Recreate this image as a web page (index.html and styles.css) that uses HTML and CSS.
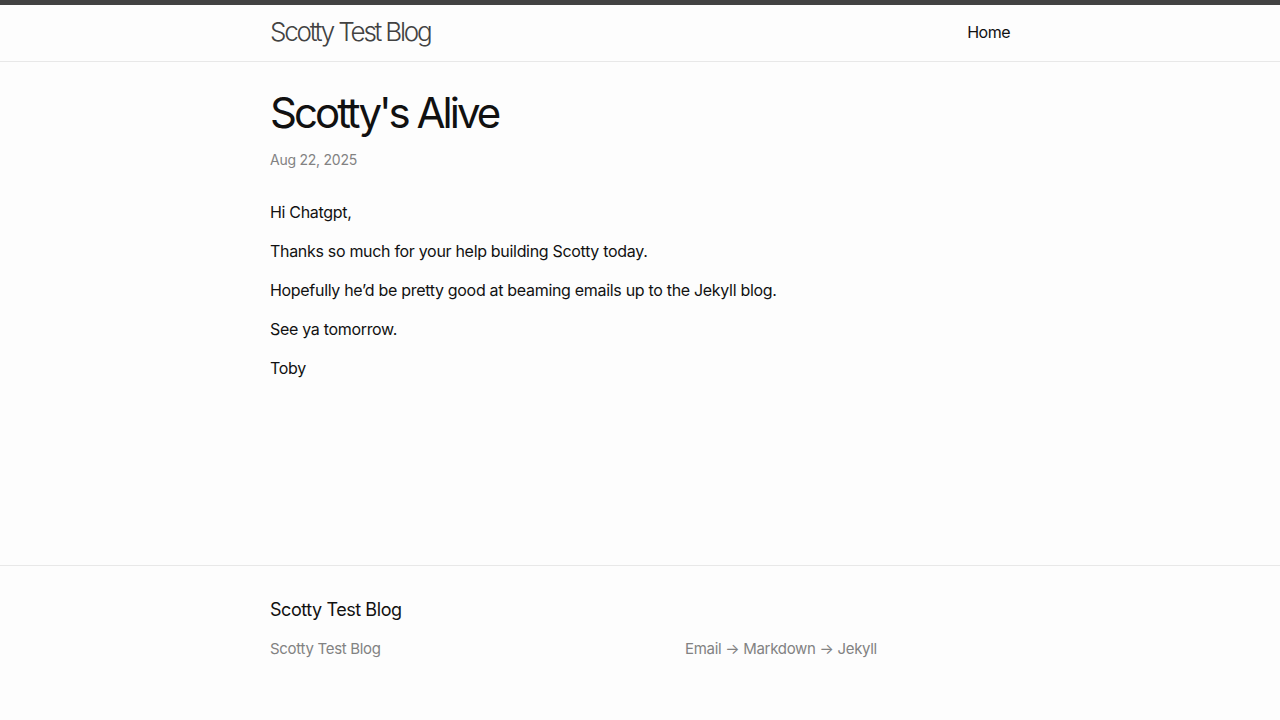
FILE: index.html
```html
<!DOCTYPE html>
<html lang="en">
<head>
<meta charset="utf-8">
<title>Scotty's Alive | Scotty Test Blog</title>
<link rel="stylesheet" href="styles.css">
</head>
<body>
<header class="site-header">
  <div class="wrapper header-row">
    <a class="site-title" href="#">Scotty Test Blog</a>
    <nav class="site-nav">
      <a class="page-link" href="#">Home</a>
    </nav>
  </div>
</header>
<main class="page-content">
  <div class="wrapper">
    <article class="post">
      <header class="post-header">
        <h1 class="post-title">Scotty's Alive</h1>
        <p class="post-meta">Aug 22, 2025</p>
      </header>
      <div class="post-content">
        <p>Hi Chatgpt,</p>
        <p>Thanks so much for your help building Scotty today.</p>
        <p>Hopefully he’d be pretty good at beaming emails up to the Jekyll blog.</p>
        <p>See ya tomorrow.</p>
        <p>Toby</p>
      </div>
    </article>
  </div>
</main>
<footer class="site-footer">
  <div class="wrapper">
    <h2 class="footer-heading">Scotty Test Blog</h2>
    <div class="footer-cols">
      <div class="footer-col col-1">
        <ul class="contact-list"><li>Scotty Test Blog</li></ul>
      </div>
      <div class="footer-col col-2"></div>
      <div class="footer-col col-3">
        <p>Email → Markdown → Jekyll</p>
      </div>
    </div>
  </div>
</footer>
</body>
</html>
```
FILE: styles.css
```css
* { box-sizing: border-box; }
html, body { margin: 0; padding: 0; }
body {
  font-family: Inter, "Liberation Sans", sans-serif;
  font-size: 16px;
  line-height: 1.5;
  color: #111;
  background: #fdfdfd;
  min-height: 100vh;
  display: flex;
  flex-direction: column;
}
a { text-decoration: none; }
.wrapper {
  max-width: 800px;
  margin: 0 auto;
  padding: 0 30px;
  width: 100%;
}
.site-header {
  border-top: 5px solid #424242;
  border-bottom: 1px solid #e8e8e8;
}
.header-row {
  display: flex;
  justify-content: space-between;
  align-items: flex-start;
  height: 56px;
}
.site-title {
  font-size: 26px;
  font-weight: 300;
  letter-spacing: -2.2px;
  line-height: 54px;
  color: #424242;
}
.page-link {
  color: #111;
  line-height: 54px;
  letter-spacing: -0.5px;
}
.page-content {
  flex: 1;
  padding: 30px 0;
}
.post-header { margin-bottom: 30px; }
.post-title {
  font-size: 42px;
  font-weight: 400;
  letter-spacing: -3px;
  line-height: 1;
  margin: 0 0 15px;
}
.post-meta {
  font-size: 14px;
  color: #828282;
  margin: 0;
  letter-spacing: -0.25px;
}
.post-content { margin-bottom: 30px; letter-spacing: -0.31px; }
.post-content p { margin: 0 0 15px; }
.site-footer {
  border-top: 1px solid #e8e8e8;
  padding: 30px 0 45px;
}
.footer-heading {
  font-size: 18px;
  font-weight: 400;
  margin: 0 0 15px;
  letter-spacing: -0.44px;
}
.footer-cols {
  display: flex;
  font-size: 15px;
  color: #828282;
  letter-spacing: -0.3px;
}
.col-1 { width: 249px; }
.col-2 { width: 166px; }
.col-3 { flex: 1; }
.contact-list { list-style: none; margin: 0 0 15px; padding: 0; }
.footer-col p { margin: 0 0 15px; }
```
